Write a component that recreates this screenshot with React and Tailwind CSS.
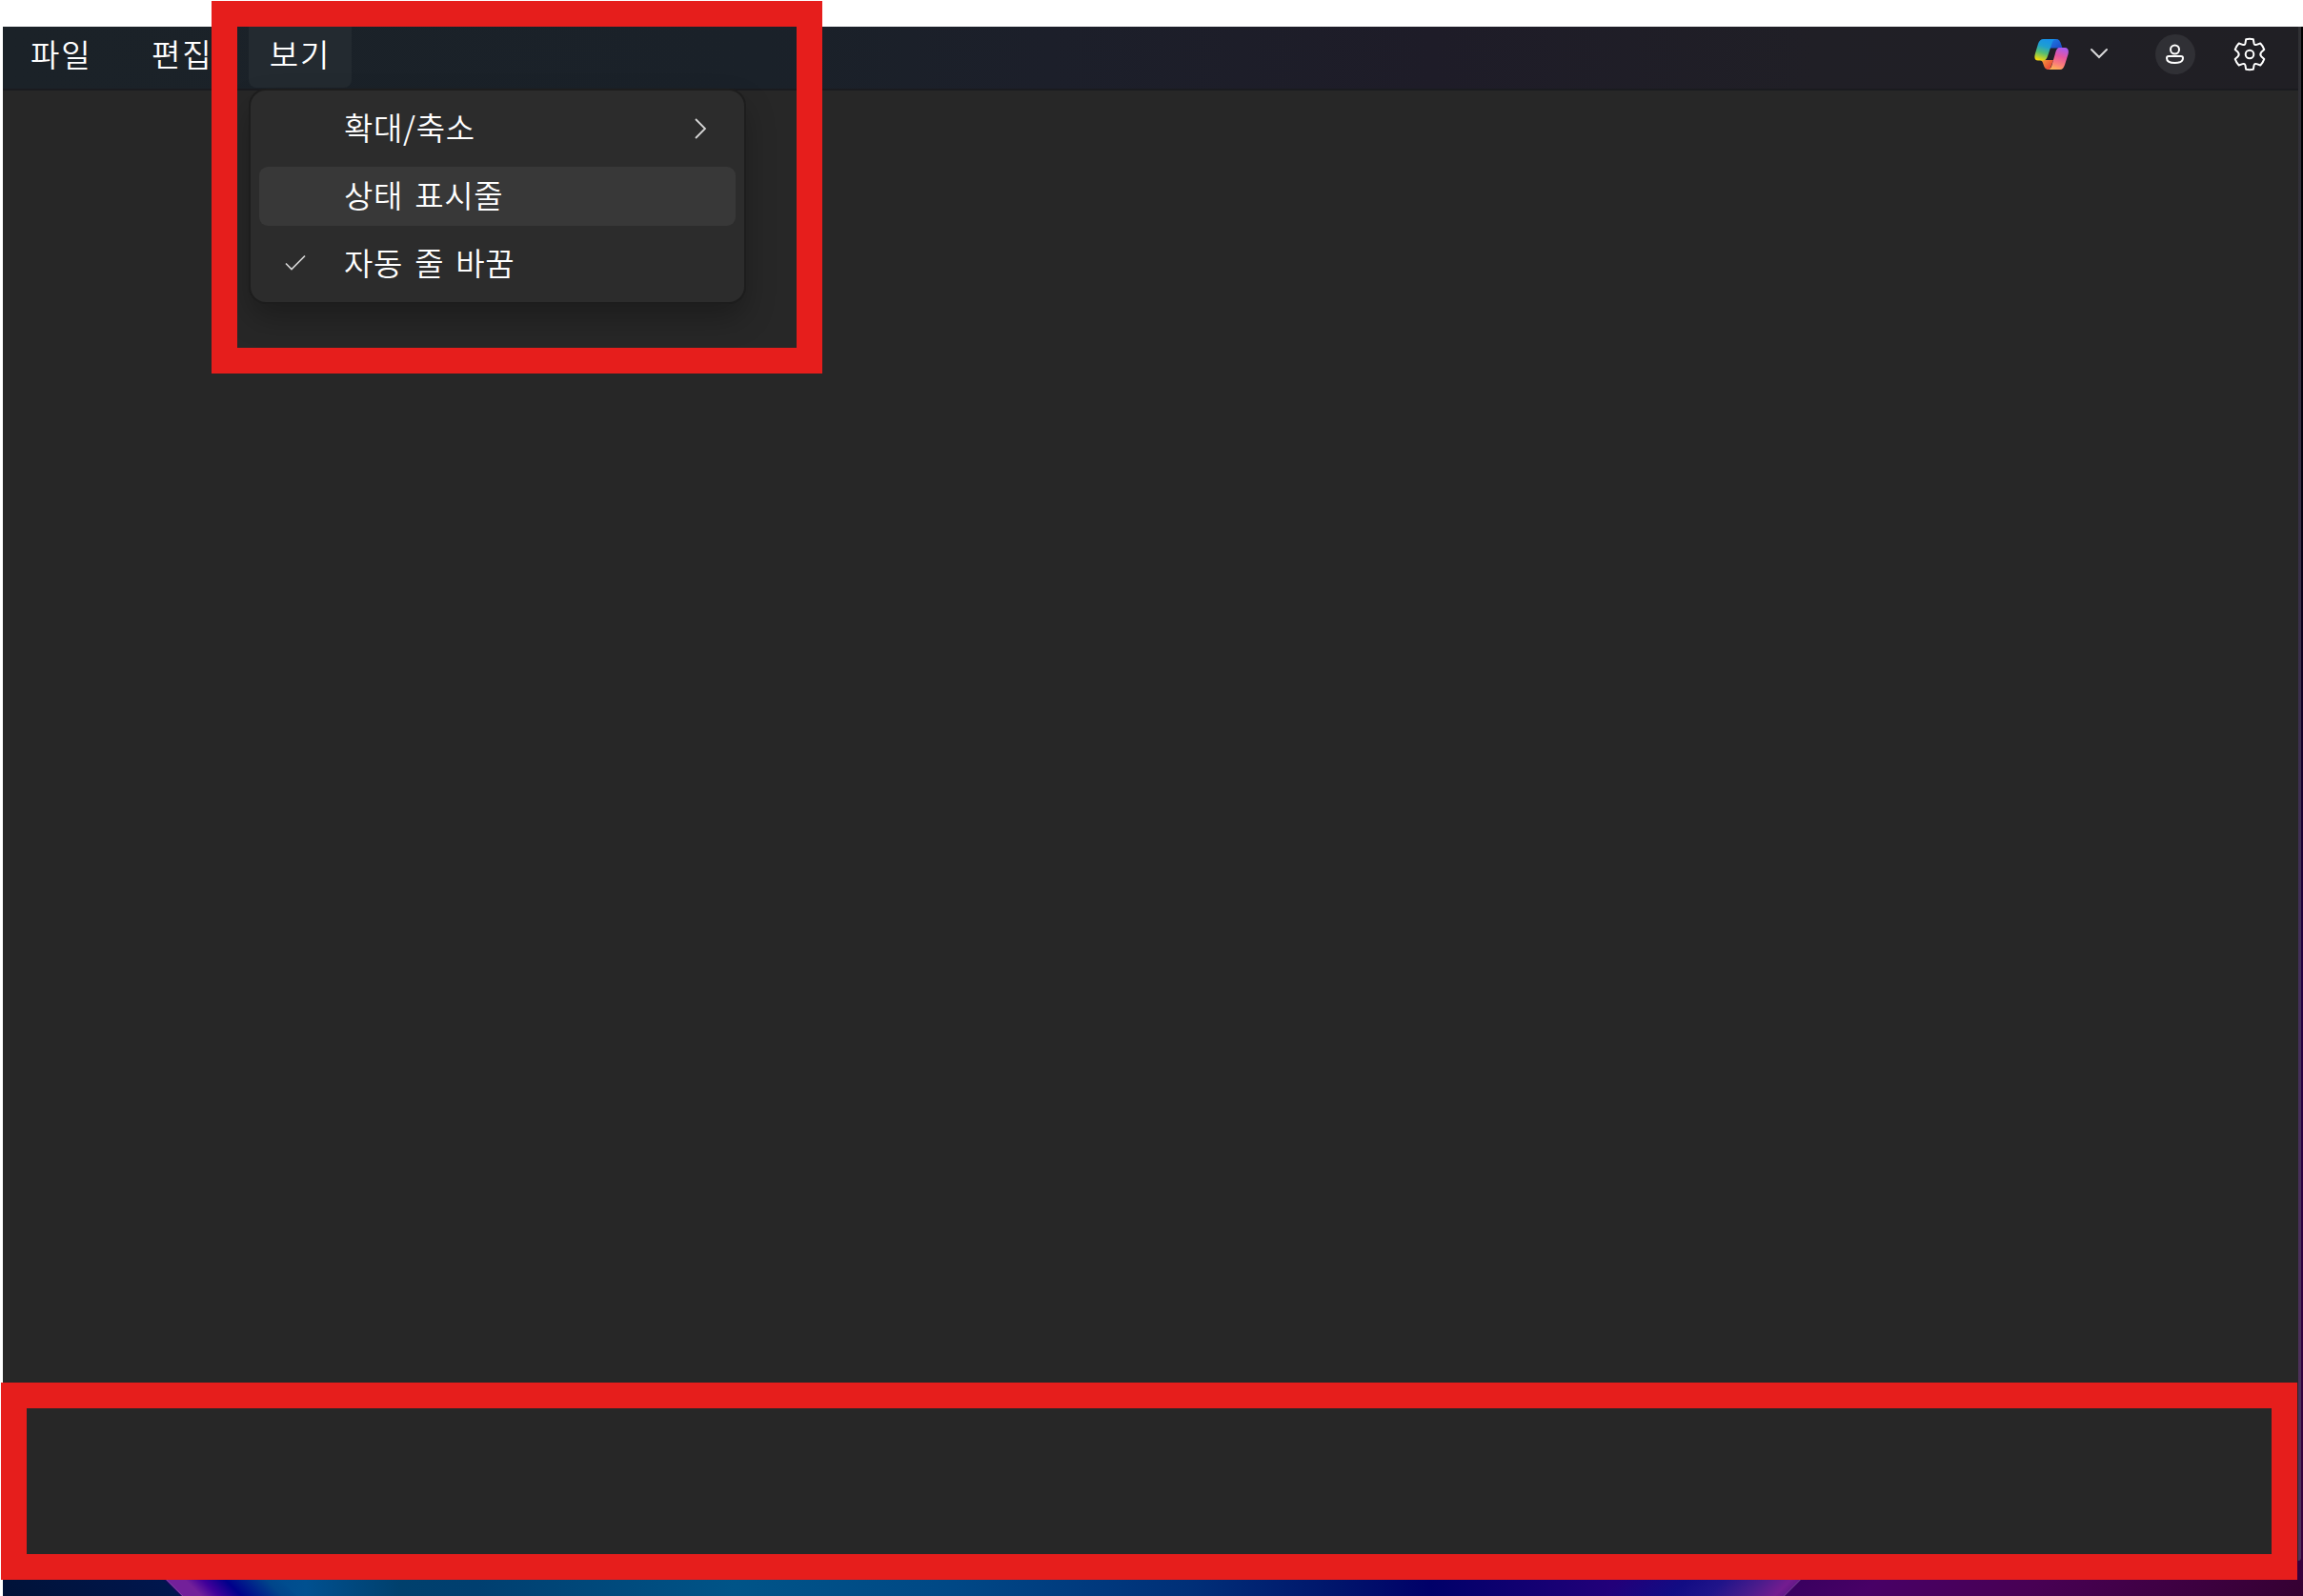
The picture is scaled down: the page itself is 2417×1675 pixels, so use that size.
const menus = [
  { label: "파일", box: "w-[125px] pl-[29px]" },
  { label: "편집", box: "w-[133px] pl-[31px]" },
];

function MenuItem({ label, checked, submenu, active }) {
  return (
    <div className={"flex h-[62px] items-center rounded-[9px] " + (active ? "bg-[#383838]" : "")}>
      <div className="flex w-[89px] shrink-0 pl-[27px]">
        {checked && (
          <svg className="-mt-[2px]" width="22" height="18" viewBox="0 0 22 18" fill="none" stroke="#d6d6d6" strokeWidth="1.7">
            <path d="M1 9.5 L7 15.5 L21 1.5" />
          </svg>
        )}
      </div>
      <span className="grow whitespace-nowrap pb-[3px]">{label}</span>
      {submenu && (
        <svg className="-mt-[1px] mr-[30px]" width="14" height="24" viewBox="0 0 14 24" fill="none" stroke="#d6d6d6" strokeWidth="1.8">
          <path d="M2 2 L12 12 L2 22" />
        </svg>
      )}
    </div>
  );
}

function Copilot() {
  return (
    <svg width="36" height="34" viewBox="0 0 36 34">
      <defs>
        <linearGradient id="left" x1="0.6" y1="0" x2="0.3" y2="1">
          <stop offset="0" stopColor="#1690ea" />
          <stop offset="0.35" stopColor="#1f9fd0" />
          <stop offset="0.65" stopColor="#54bd72" />
          <stop offset="1" stopColor="#f3d90c" />
        </linearGradient>
        <linearGradient id="right" x1="0.7" y1="0" x2="0.4" y2="1">
          <stop offset="0" stopColor="#a95bee" />
          <stop offset="0.4" stopColor="#e6569f" />
          <stop offset="0.75" stopColor="#fb7f78" />
          <stop offset="1" stopColor="#ffb057" />
        </linearGradient>
        <linearGradient id="fold" x1="0" y1="0" x2="1" y2="1">
          <stop offset="0" stopColor="#1b7fe6" />
          <stop offset="1" stopColor="#1f48c4" />
        </linearGradient>
        <linearGradient id="base" x1="0" y1="0" x2="1" y2="0.6">
          <stop offset="0" stopColor="#f5a33a" />
          <stop offset="1" stopColor="#ea4038" />
        </linearGradient>
      </defs>
      <path d="M16 1 H23 C26 1 27 3 28 6 L29.500 10.500 H15Z" fill="url(#fold)" />
      <path d="M6 23 H20 L17 31 C16.500 32.500 16 33 15 33 C11.500 33 10.500 30.500 9.500 27.500 C8.800 25 8 23.500 6 23Z" fill="url(#base)" />
      <path d="M10 1 H23 C20 1 19 4 18 7 L14 19 C13 22 11.500 23.500 9 23.500 H4 C0 23.500 -0.200 20 1 16 L4 6 C5 3 6.500 1 10 1Z" fill="url(#left)" />
      <path d="M26.500 10 H32 C35.500 10 36.500 13 35.500 17 L32 28 C31 31 29.500 33 27 33 H14 C17 33 17.800 30.500 18.700 27.500 L22 16 C23 12.500 24 10 26.500 10Z" fill="url(#right)" />
    </svg>
  );
}

function Gear() {
  return (
    <svg width="34" height="36" viewBox="0 0 34 36" fill="none" stroke="#fff" strokeWidth="2" strokeLinejoin="round">
      <path d="M13.200 2.200 Q17 1.300 20.800 2.200 L21.500 6.200 Q22 8.600 24.400 7.900 L28.300 6.500 Q31 9.300 32.300 13.100 L29.200 15.800 Q27.400 18 29.200 20.200 L32.300 22.900 Q31 26.700 28.300 29.500 L24.400 28.100 Q22 27.400 21.500 29.800 L20.800 33.800 Q17 34.700 13.200 33.800 L12.500 29.800 Q12 27.400 9.600 28.100 L5.700 29.500 Q3 26.700 1.700 22.900 L4.800 20.200 Q6.600 18 4.800 15.800 L1.700 13.100 Q3 9.300 5.700 6.500 L9.600 7.900 Q12 8.600 12.500 6.200Z" />
      <circle cx="17" cy="18" r="4.300" />
    </svg>
  );
}

function Wallpaper() {
  return (
    <div className="flex h-[17px] overflow-hidden">
      <div className="-ml-[20px] w-[200px] skew-x-[45deg] bg-[linear-gradient(90deg,#001236,#00164e_98%,#1c0060)]" />
      <div className="w-[120px] skew-x-[45deg] bg-[linear-gradient(90deg,#73209a_0,#73209a_20px,#40009a_38px,#00008b_62px,#00458a_105px,#004b8e)]" />
      <div className="-mx-[12px] w-[1412px] bg-[linear-gradient(90deg,#004b8e_0,#005090_30px,#00406d_130px,#003f70_210px,#005488_480px,#004886_710px,#002f78_960px,#00156c_1110px,#000069_1210px,#22007a_1400px)]" />
      <div className="w-[190px] -skew-x-[45deg] bg-[linear-gradient(90deg,#22007a_0,#120c84_70px,#20148a_110px,#4a1c8c_150px,#741c90_180px,#641888)]" />
      <div className="-mr-[20px] grow -skew-x-[45deg] bg-[linear-gradient(90deg,#3a0060,#480066_80px,#480054_250px,#340030)]" />
    </div>
  );
}

export default function App() {
  return (
    <div className="relative h-[1675px] w-[2417px] overflow-hidden bg-white pl-[3px] pt-[28px] font-['Noto_Sans_CJK_KR','Noto_Sans',sans-serif] text-[33px] font-[350] leading-none tracking-[0.7px] text-white [word-spacing:4px]">
      <div className="flex h-[1647px] flex-col">
        <div className="flex h-[1630px] bg-[#38003c]">
          <div className="flex h-[1610px] w-[2409px] flex-col">
            <div className="flex h-[67px] border-b-2 border-[#1a1b1f] bg-[linear-gradient(90deg,#1b2228_0,#1a2129_800px,#1c1f2a_1100px,#1e1c28_1500px,#201f26_1900px,#201f24_100%)] tracking-[2px]">
              {menus.map((m) => (
                <div key={m.label} className={"flex h-[57px] items-center " + m.box}>{m.label}</div>
              ))}
              <div className="flex h-[64px] w-[108px] justify-center rounded-b-[8px] bg-[#232a30] pb-[7px]">
                <span className="flex items-center">보기</span>
              </div>
              <div className="ml-auto flex h-[58px] items-center pr-[34px]">
                <Copilot />
                <svg className="-mt-[2px] ml-[22px]" width="20" height="12" viewBox="0 0 20 12" fill="none" stroke="#d8d8da" strokeWidth="2" strokeLinecap="round">
                  <path d="M2 2 L10 10 L18 2" />
                </svg>
                <div className="ml-[49px] flex size-[42px] items-center justify-center rounded-full bg-[#303035]">
                  <svg width="20" height="22" viewBox="0 0 20 22" fill="none" stroke="#fff" strokeWidth="2">
                    <circle cx="9.500" cy="6" r="4.500" />
                    <path d="M3 13 H16 Q18 13 18 15 C18 18.500 14.500 20 9.500 20 S1 18.500 1 15 Q1 13 3 13Z" />
                  </svg>
                </div>
                <div className="ml-[40px]"><Gear /></div>
              </div>
            </div>
            <div className="grow bg-[#272727]" />
          </div>
          <div className="h-[1610px] w-[3px] rounded-br-[8px] bg-[linear-gradient(180deg,#303034,#343040_400px,#43305a_1000px,#51305a)]" />
          <div className="w-[2px] bg-[linear-gradient(180deg,#000,#050010_500px,#240040_1000px,#38003c)]" />
        </div>
        <Wallpaper />
      </div>

      <div className="absolute left-[263px] top-[95px] flex h-[222px] w-[518px] flex-col gap-[9px] rounded-[16px] bg-[#2c2c2c] p-[9px] shadow-[0_0_0_2px_#1d1d1d,0_16px_32px_rgba(0,0,0,0.28)]">
        <MenuItem label="확대/축소" submenu />
        <MenuItem label="상태 표시줄" active />
        <MenuItem label="자동 줄 바꿈" checked />
      </div>

      <div className="absolute left-[222px] top-[1px] h-[391px] w-[641px] border-[27px] border-[#e61e1c]" />
      <div className="absolute left-[1px] top-[1451px] h-[207px] w-[2410px] border-[27px] border-[#e61e1c]" />
    </div>
  );
}
